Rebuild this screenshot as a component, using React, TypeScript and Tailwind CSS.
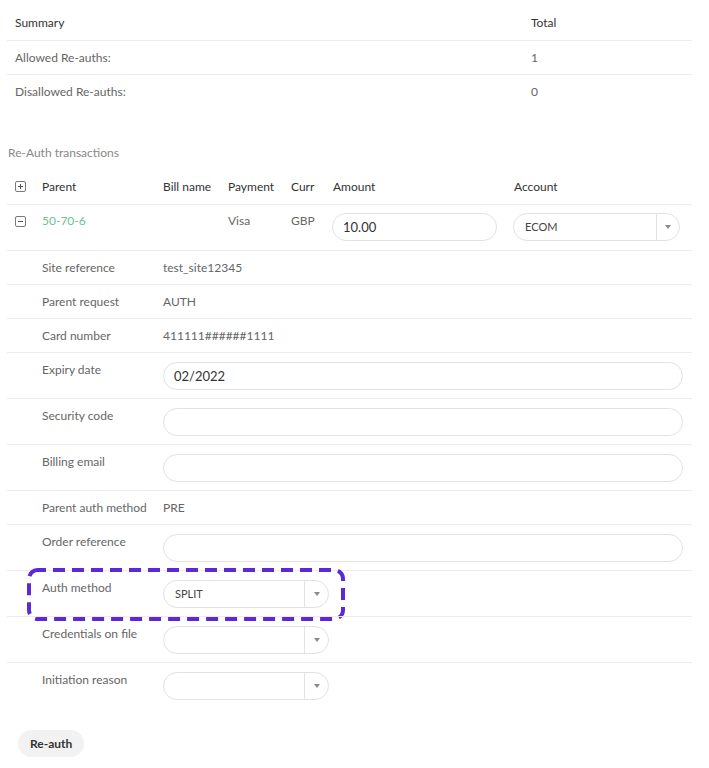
import { useState } from 'react';

const line = 'border-t border-[#ececec]';

function PlusMinus({ minus }: { minus?: boolean }) {
  return (
    <span className="relative inline-block w-[11px] h-[11px] border border-[#7a7a7a] rounded-[2px]">
      <span className="absolute left-[2px] right-[2px] top-[4px] h-[1px] bg-[#555]" />
      {!minus && <span className="absolute top-[2px] bottom-[2px] left-[4px] w-[1px] bg-[#555]" />}
    </span>
  );
}

function Select({ value, width, arrow = 24 }: { value?: string; width: string; arrow?: number }) {
  return (
    <div className={`flex h-[28px] ${width} rounded-full border border-[#e2e2e2] bg-white`}>
      <div className="flex-1 flex items-center pl-[11px] text-[11px] uppercase text-[#444]">{value}</div>
      <div className={`flex items-center justify-center border-l border-[#e2e2e2] ${arrow === 24 ? 'w-[24px]' : 'w-[23px]'}`}>
        <span className="block w-0 h-0 border-l-[3px] border-r-[3px] border-t-[4px] border-l-transparent border-r-transparent border-t-[#8a8a8a]" />
      </div>
    </div>
  );
}

function TextInput({ value, width = 'w-full' }: { value?: string; width?: string }) {
  const [v, setV] = useState(value || '');
  return (
    <input
      value={v}
      onChange={(e) => setV(e.target.value)}
      className={`h-[28px] ${width} rounded-full border border-[#e2e2e2] px-[10px] text-[13px] text-[#333] outline-none`}
    />
  );
}

function TextRow({ label, value }: { label: string; value: string }) {
  return (
    <div className={`grid grid-cols-[35px_121px_1fr] h-[34px] items-center ${line}`}>
      <div />
      <div className="text-[#666]">{label}</div>
      <div className="text-[#666]">{value}</div>
    </div>
  );
}

function FieldRow({ label, children, first, annotate }: { label: string; children: React.ReactNode; first?: boolean; annotate?: boolean }) {
  return (
    <div className={`relative grid grid-cols-[35px_121px_1fr] h-[46px] pt-[9px] pr-[9px] items-start ${first ? '' : line}`}>
      <div />
      <div className="leading-[16px] text-[#666]">{label}</div>
      <div>{children}</div>
      {annotate && (
        // highlight annotation drawn over the row
        <svg className="absolute left-[20px] top-[-3px] pointer-events-none" width="318" height="53" viewBox="0 0 318 53">
          <rect x="2" y="2" width="314" height="49" rx="9" fill="none" stroke="#5b2ad6" strokeWidth="4" strokeDasharray="12 7" strokeDashoffset="4" />
        </svg>
      )}
    </div>
  );
}

export default function App() {
  return (
    <div className="w-[709px] min-h-[768px] bg-white pl-[7px] pr-[17px] pt-[6px] font-['Lato','Open_Sans',sans-serif] text-[12px] leading-[16px]">
      {/* Summary */}
      <div>
        <div className="flex h-[34px] items-center text-[#333]">
          <div className="w-[524px] pl-[8px]">Summary</div>
          <div>Total</div>
        </div>
        <div className={`flex h-[34px] items-center text-[#666] ${line}`}>
          <div className="w-[524px] pl-[8px]">Allowed Re-auths:</div>
          <div>1</div>
        </div>
        <div className={`flex h-[34px] items-center text-[#666] ${line}`}>
          <div className="w-[524px] pl-[8px]">Disallowed Re-auths:</div>
          <div>0</div>
        </div>
      </div>

      <div className="mt-[37px] pl-[1px] text-[#888]">Re-Auth transactions</div>

      {/* Transactions */}
      <div className="mt-[9px]">
        <div className="grid grid-cols-[35px_121px_65px_63px_41px_181px_1fr] h-[34px] items-center text-[#333]">
          <div className="pl-[8px] pt-[2px]"><PlusMinus /></div>
          <div>Parent</div>
          <div>Bill name</div>
          <div>Payment</div>
          <div>Curr</div>
          <div className="pl-[1px]">Amount</div>
          <div className="pl-[1px]">Account</div>
        </div>
        <div className={`grid grid-cols-[35px_121px_65px_63px_41px_181px_1fr] h-[46px] pt-[8px] items-start ${line}`}>
          <div className="pl-[8px] pt-[2px]"><PlusMinus minus /></div>
          <div className="text-[#6cbf96]">50-70-6</div>
          <div />
          <div className="text-[#666]">Visa</div>
          <div className="text-[#666]">GBP</div>
          <div><TextInput value="10.00" width="w-[165px]" /></div>
          <div><Select value="ECOM" width="w-[167px]" arrow={23} /></div>
        </div>

        <TextRow label="Site reference" value="test_site12345" />
        <TextRow label="Parent request" value="AUTH" />
        <TextRow label="Card number" value="411111######1111" />
        <FieldRow label="Expiry date"><TextInput value="02/2022" /></FieldRow>
        <FieldRow label="Security code"><TextInput /></FieldRow>
        <FieldRow label="Billing email"><TextInput /></FieldRow>
        <TextRow label="Parent auth method" value="PRE" />
        <FieldRow label="Order reference"><TextInput /></FieldRow>
        <FieldRow label="Auth method" annotate><Select value="SPLIT" width="w-[166px]" /></FieldRow>
        <FieldRow label="Credentials on file"><Select width="w-[166px]" /></FieldRow>
        <FieldRow label="Initiation reason"><Select width="w-[166px]" /></FieldRow>
      </div>

      <button className="mt-[22px] ml-[11px] h-[27px] px-[12px] rounded-full bg-[#f2f2f2] text-[12px] font-bold text-[#333]">
        Re-auth
      </button>
    </div>
  );
}
